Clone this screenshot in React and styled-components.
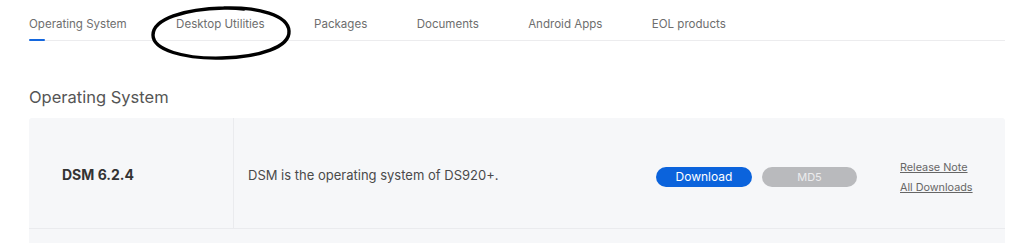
import React from "react";
import styled, { createGlobalStyle } from "styled-components";

const Global = createGlobalStyle`
  html, body { margin: 0; padding: 0; background: #fff; }
  body { font-family: Inter, "Noto Sans", Arial, sans-serif; -webkit-font-smoothing: antialiased; }
  * { box-sizing: border-box; }
`;

const Page = styled.div`
  position: relative;
  width: 1024px;
  height: 243px;
  overflow: hidden;
  padding: 0 19px 0 29px;
`;

const TabBar = styled.nav`
  display: flex;
  gap: 49.4px;
  height: 41px;
  border-bottom: 1px solid #ececee;
`;

const Tab = styled.div`
  position: relative;
  font-size: 11.55px;
  color: #6e6e6e;
  padding-top: 17px;
  white-space: nowrap;
  &::after {
    content: "";
    display: ${(p) => (p.$active ? "block" : "none")};
    position: absolute;
    left: 0;
    bottom: -1px;
    width: 16px;
    height: 2px;
    background: #1467de;
    border-radius: 1px;
  }
`;

const Circle = styled.svg`
  position: absolute;
  left: 148px;
  top: 3px;
  pointer-events: none;
`;

const Heading = styled.h2`
  margin: 46px 0 0;
  font-size: 16.5px;
  font-weight: 400;
  color: #555;
  line-height: 20px;
`;

const Card = styled.div`
  margin-top: 11px;
  background: #f6f7f9;
  border-radius: 3px 3px 0 0;
`;

const Row = styled.div`
  display: flex;
  align-items: stretch;
  height: 111px;
  border-bottom: 1px solid #eaebee;
`;

const NameCell = styled.div`
  width: 205px;
  border-right: 1px solid #eaebee;
  display: flex;
  align-items: center;
  padding-left: 33px;
  padding-top: 2px;
  font-size: 14px;
  font-weight: 700;
  color: #333;
`;

const DescCell = styled.div`
  flex: 1;
  display: flex;
  align-items: center;
  padding-left: 14px;
  padding-top: 4px;
  font-size: 13px;
  color: #4a4a4a;
`;

const Actions = styled.div`
  display: flex;
  align-items: center;
  gap: 10px;
  padding-top: 7px;
  margin-right: 43px;
`;

const PillButton = styled.button`
  width: ${(p) => p.$w}px;
  height: 20px;
  border: none;
  border-radius: 10px;
  background: ${(p) => (p.$primary ? "#0b63dc" : "#b9babd")};
  color: ${(p) => (p.$primary ? "#fff" : "#ececee")};
  font-family: inherit;
  font-size: ${(p) => (p.$primary ? "12px" : "11px")};
  padding: 0;
  cursor: pointer;
`;

const Links = styled.div`
  width: 105px;
  display: flex;
  flex-direction: column;
  justify-content: center;
  gap: 6px;
  padding-top: 9px;
`;

const LinkText = styled.a`
  font-size: 10.8px;
  color: #666;
  text-decoration: underline;
  line-height: 14px;
`;

const NextRow = styled.div`
  height: 20px;
`;

export default function App() {
  const tabs = ["Operating System", "Desktop Utilities", "Packages", "Documents", "Android Apps", "EOL products"];
  return (
    <>
      <Global />
      <Page>
        <TabBar>
          {tabs.map((t, i) => (
            <Tab key={t} $active={i === 0}>{t}</Tab>
          ))}
        </TabBar>
        <Circle width="148" height="60" viewBox="0 0 148 60">
          <path
            d="M76 5 C110 4 140 12 141 28 C142 44 112 54 74 55 C36 56 5 47 5 32 C5 16 36 6 76 5 C84 4.8 90 5.2 96 6"
            fill="none"
            stroke="#000"
            strokeWidth="3.4"
            strokeLinecap="round"
          />
        </Circle>
        <Heading>Operating System</Heading>
        <Card>
          <Row>
            <NameCell>DSM 6.2.4</NameCell>
            <DescCell>DSM is the operating system of DS920+.</DescCell>
            <Actions>
              <PillButton $primary $w={96}>Download</PillButton>
              <PillButton $w={95}>MD5</PillButton>
            </Actions>
            <Links>
              <LinkText>Release Note</LinkText>
              <LinkText>All Downloads</LinkText>
            </Links>
          </Row>
          <NextRow />
        </Card>
      </Page>
    </>
  );
}
